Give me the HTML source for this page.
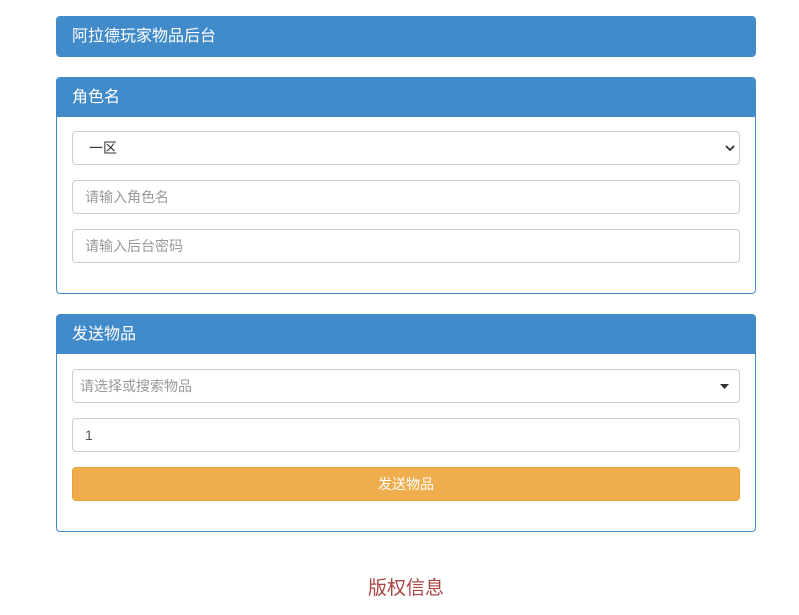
<!DOCTYPE html>
<html><head><meta charset="utf-8"><style>
*{box-sizing:border-box;margin:0;padding:0}
body{width:799px;height:615px;background:#fff;font-family:"Liberation Sans","Noto Sans CJK SC",sans-serif;position:relative;overflow:hidden}
.p{position:absolute;left:56px;width:700px;border:1px solid #428bca;border-radius:4px;background:#fff}
.h{background:#428bca;color:#fff;font-size:16px;height:39px;line-height:39px;padding-left:15px;border-radius:3px 3px 0 0}
.f{position:absolute;left:15px;width:668px;height:34px;border:1px solid #ccc;border-radius:4px;font-size:14px;color:#999;line-height:32px;padding-left:12px;background:#fff}
.b{position:absolute;left:15px;width:668px;height:34px;background:#f0ad4e;border:1px solid #eea236;border-radius:4px;color:#fff;font-size:14px;text-align:center;line-height:32px}
</style></head><body>
<div class="p" style="top:16px;height:41px"><div class="h" style="height:39px;border-radius:3px">阿拉德玩家物品后台</div></div>
<div class="p" style="top:77px;height:217px"><div class="h">角色名</div>
<div class="f" style="top:53px;color:#333;padding-left:16px">一区
<svg style="position:absolute;right:4px;top:11px" width="10" height="10" viewBox="0 0 10 10"><path d="M1 3l4 4 4-4" stroke="#333" stroke-width="1.8" fill="none"/></svg></div>
<div class="f" style="top:102px">请输入角色名</div>
<div class="f" style="top:151px">请输入后台密码</div>
</div>
<div class="p" style="top:314px;height:218px"><div class="h">发送物品</div>
<div class="f" style="top:54px;padding-left:7px">请选择或搜索物品
<svg style="position:absolute;right:10px;top:14px" width="9" height="5"><path d="M0 0h9l-4.5 5z" fill="#333"/></svg></div>
<div class="f" style="top:103px;color:#555">1</div>
<div class="b" style="top:152px">发送物品</div>
</div>
<div style="position:absolute;top:573px;left:0;width:812px;text-align:center;color:#a94442;font-size:19px">版权信息</div>
</body></html>
